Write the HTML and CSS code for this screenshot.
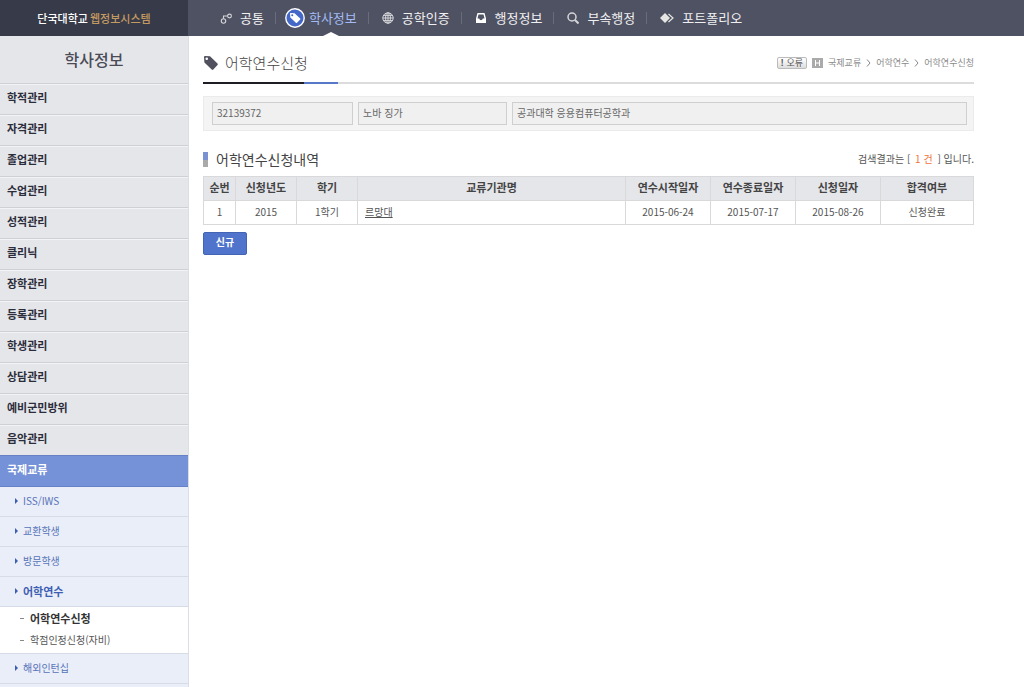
FILE: index.html
```html
<!DOCTYPE html>
<html lang="ko">
<head>
<meta charset="utf-8">
<title>단국대학교 웹정보시스템</title>
<link rel="stylesheet" href="styles.css">
</head>
<body>
<header class="topbar">
  <a class="brand" href="#">단국대학교 <span class="brand-accent">웹정보시스템</span></a>
  <nav class="topnav">
    <a class="topnav-item" href="#">
      <svg class="icon" viewBox="0 0 12 12" fill="none" stroke="#d5d6da" stroke-width="1.1"><circle cx="3.500" cy="9" r="2.200"/><circle cx="9.500" cy="4" r="1.900"/><path d="M3.500 6.800V4H7.500"/></svg>
      <span>공통</span></a>
    <a class="topnav-item current" href="#">
      <svg class="badge" viewBox="0 0 20 20"><circle cx="10" cy="10" r="9.200" fill="#4468c8" stroke="#fff" stroke-width="1.400"/><path fill="#fff" fill-rule="evenodd" d="M5 5.6Q5 5 5.6 5L9.6 5.3 15.2 10.4Q15.7 11 15.2 11.5L12 14.8Q11.4 15.2 10.9 14.8L5.3 9.5ZM7.2 6.2a1 1 0 1 0 .1 2 1 1 0 0 0-.1-2Z"/></svg>
      <span class="topnav-label">학사정보</span></a>
    <a class="topnav-item" href="#">
      <svg class="icon" viewBox="0 0 12 12" fill="none" stroke="#d5d6da" stroke-width="1"><circle cx="6" cy="6" r="5.2"/><ellipse cx="6" cy="6" rx="2.4" ry="5.2"/><path d="M6 .8v10.4M.8 6h10.4M1.6 3.4h8.8M1.6 8.6h8.8"/></svg>
      <span>공학인증</span></a>
    <a class="topnav-item" href="#">
      <svg class="icon" viewBox="0 0 12 12"><path fill="#fff" fill-rule="evenodd" d="M2.500 1h7L11 6.500V11H1V6.500ZM3.500 2.400 2.500 6.500H4.200Q4.500 8.300 6 8.300T7.800 6.500H9.500L8.500 2.400Z"/></svg>
      <span>행정정보</span></a>
    <a class="topnav-item" href="#">
      <svg class="icon" viewBox="0 0 12 12" fill="none" stroke="#d5d6da"><circle cx="5" cy="5" r="4" stroke-width="1.5"/><path stroke-width="2" d="M8 8l3.500 3.500"/></svg>
      <span>부속행정</span></a>
    <a class="topnav-item" href="#">
      <svg class="icon wide" viewBox="0 0 14 12"><path fill="#e6e6e2" d="M5 1l5 5-5 5-5-5Z"/><path fill="none" stroke="#e6e6e2" stroke-width="1.200" d="M8.500 2l4.500 4-4.500 4"/></svg>
      <span>포트폴리오</span></a>
  </nav>
</header>
<div class="layout">
  <aside class="sidebar">
    <h2 class="sidebar-title">학사정보</h2>
    <ul class="menu">
      <li><a class="menu-link" href="#">학적관리</a></li>
      <li><a class="menu-link" href="#">자격관리</a></li>
      <li><a class="menu-link" href="#">졸업관리</a></li>
      <li><a class="menu-link" href="#">수업관리</a></li>
      <li><a class="menu-link" href="#">성적관리</a></li>
      <li><a class="menu-link" href="#">클리닉</a></li>
      <li><a class="menu-link" href="#">장학관리</a></li>
      <li><a class="menu-link" href="#">등록관리</a></li>
      <li><a class="menu-link" href="#">학생관리</a></li>
      <li><a class="menu-link" href="#">상담관리</a></li>
      <li><a class="menu-link" href="#">예비군민방위</a></li>
      <li><a class="menu-link" href="#">음악관리</a></li>
      <li><a class="menu-link active" href="#">국제교류</a>
        <ul class="submenu">
          <li><a class="sub-link" href="#">ISS/IWS</a></li>
          <li><a class="sub-link" href="#">교환학생</a></li>
          <li><a class="sub-link" href="#">방문학생</a></li>
          <li><a class="sub-link open" href="#">어학연수</a>
            <ul class="pages">
              <li><a class="page-link selected" href="#">어학연수신청</a></li>
              <li><a class="page-link" href="#">학점인정신청(자비)</a></li>
            </ul>
          </li>
          <li><a class="sub-link" href="#">해외인턴십</a></li>
        </ul>
      </li>
    </ul>
  </aside>
  <main class="content">
    <div class="page-head">
      <svg class="tag" viewBox="0 0 16 16"><path fill="#50505e" fill-rule="evenodd" d="M1 2Q1 1 2 1L7 1.300 14.500 8.500Q15.300 9.300 14.500 10.100L10.300 14.600Q9.500 15.300 8.700 14.600L1.400 7.400ZM3.700 2.500a1.300 1.300 0 1 0 .1 2.600 1.300 1.300 0 0 0-.1-2.600Z"/></svg>
      <h1 class="page-title">어학연수신청</h1>
      <button class="error-btn" type="button"><b>!</b> 오류</button>
      <nav class="crumbs">
        <svg class="home" viewBox="0 0 11 10"><path fill="#aaa" d="M0 0h11v10H0Z"/><path fill="none" stroke="#fff" d="M3.500 2v6M7.500 2v6M3.500 5h4"/></svg>
        <a href="#">국제교류</a>
        <svg class="chev" viewBox="0 0 5 8"><path d="M1 .5 4 4 1 7.500"/></svg>
        <a href="#">어학연수</a>
        <svg class="chev" viewBox="0 0 5 8"><path d="M1 .5 4 4 1 7.500"/></svg>
        <a href="#">어학연수신청</a>
      </nav>
    </div>
    <div class="rule"></div>
    <form class="student">
      <input class="field" type="text" aria-label="학번" value="32139372" readonly>
      <input class="field" type="text" aria-label="성명" value="노바 징가" readonly>
      <input class="field" type="text" aria-label="소속" value="공과대학 응용컴퓨터공학과" readonly>
    </form>
    <div class="section-head">
      <h2 class="section-title">어학연수신청내역</h2>
      <p class="result">검색결과는 [ <span class="count">1 건</span> ] 입니다.</p>
    </div>
    <table class="grid">
      <colgroup><col class="c-no"><col class="c-term"><col class="c-term"><col><col class="c-date"><col class="c-date"><col class="c-date"><col class="c-state"></colgroup>
      <thead><tr><th>순번</th><th>신청년도</th><th>학기</th><th>교류기관명</th><th>연수시작일자</th><th>연수종료일자</th><th>신청일자</th><th>합격여부</th></tr></thead>
      <tbody><tr><td>1</td><td>2015</td><td>1학기</td><td class="name"><a href="#">르망대</a></td><td>2015-06-24</td><td>2015-07-17</td><td>2015-08-26</td><td>신청완료</td></tr></tbody>
    </table>
    <button class="new-btn" type="button">신규</button>
  </main>
</div>
</body>
</html>
```
FILE: styles.css
```css
* { box-sizing: border-box; }
body {
  margin: 0;
  min-height: 100vh;
  display: flex;
  flex-direction: column;
  background: #fff;
  color: #555;
  font: 10px/16px "Noto Sans CJK KR", sans-serif;
}
ul { list-style: none; margin: 0; padding: 0; }
h1, h2, p { margin: 0; }
a { color: inherit; text-decoration: none; }
button, input { font: inherit; }
svg { flex: none; }

.topbar { display: flex; height: 36px; background: #4f5262; }
.brand {
  width: 188px;
  flex: none;
  display: flex;
  align-items: center;
  justify-content: center;
  gap: 2px;
  padding-bottom: 1px;
  background: #373b49;
  color: #fff;
  font-size: 11px;
  font-weight: 500;
}
.brand-accent { color: #c59a60; }
.topnav { display: flex; padding: 0 0 1px 18px; }
.topnav-item {
  position: relative;
  display: flex;
  align-items: center;
  gap: 8px;
  padding: 0 11px 0 14px;
  color: #f0f0f2;
  font-size: 13px;
  font-weight: 400;
  white-space: nowrap;
}
.topnav-item + .topnav-item::before {
  content: "";
  position: absolute;
  left: 0;
  top: 12px;
  height: 12px;
  border-left: 1px solid #696c7b;
}
.topnav-item.current { gap: 4px; padding: 0 11px 0 10px; color: #a3bbf5; }
.icon { width: 12px; height: 12px; }
.icon.wide { width: 14px; }
.badge { width: 20px; height: 20px; }
.topnav-label { position: relative; }
.topnav-label::after {
  content: "";
  position: absolute;
  left: 50%;
  bottom: -11px;
  margin-left: -12px;
  border: solid transparent;
  border-width: 0 10px 5px;
  border-bottom-color: #fff;
}

.layout { display: flex; flex: 1; }
.sidebar { width: 189px; flex: none; background: #e5e6ea; border-right: 1px solid #dcdee5; }
.sidebar-title {
  padding: 11px 0 12px;
  color: #4a4b57;
  font-size: 16px;
  font-weight: 500;
  line-height: 24px;
  text-align: center;
}
.menu-link {
  display: block;
  height: 31px;
  padding: 5px 7px;
  border-top: 1px solid #cfd0d5;
  box-shadow: inset 0 1px #f3f3f6;
  color: #2c2d3a;
  font-size: 11px;
  font-weight: 700;
}
.menu-link.active { background: #7591d7; border-color: #6681c6; box-shadow: none; color: #fff; }
.submenu { padding-bottom: 3px; border-top: 1px solid #6681c6; background: #eaeef8; }
.sub-link {
  display: flex;
  align-items: center;
  gap: 5px;
  height: 30px;
  padding: 0 15px 2px;
  border-bottom: 1px solid #d6dbe8;
  color: #5673b8;
}
.sub-link::before {
  content: "";
  border: solid transparent;
  border-width: 3px 0 3px 3px;
  border-left-color: #3c5eae;
}
.sub-link.open { color: #3c60b4; font-size: 11px; font-weight: 700; }
.pages { padding-bottom: 2px; background: #fff; border-bottom: 1px solid #d6dbe8; }
.page-link { display: flex; align-items: center; gap: 6px; height: 22px; padding-left: 20px; }
.page-link::before { content: ""; width: 4px; border-top: 1px solid #888; }
.page-link.selected { color: #333; font-size: 11px; font-weight: 700; }

.content { flex: 1; min-width: 0; padding: 15px 50px 15px 14px; }
.page-head { display: flex; align-items: center; height: 24px; }
.tag { width: 16px; height: 16px; margin-right: 6px; }
.page-title { color: #444; font-size: 15px; font-weight: 300; margin-right: auto; }
.error-btn {
  height: 12px;
  padding: 0 3px;
  border: 1px solid #bbb;
  border-radius: 2px;
  background: linear-gradient(#fff, #ddd);
  color: #555;
  font-size: 9px;
  line-height: 10px;
}
.crumbs { display: flex; align-items: center; gap: 5px; margin-left: 5px; color: #8a8a8a; font-size: 9px; }
.home { width: 11px; height: 10px; }
.chev { width: 5px; height: 8px; fill: none; stroke: #888; }
.rule {
  height: 2px;
  margin: 7px 0 12px;
  background: linear-gradient(90deg, #1e1d25 101px, #5578c8 101px 135px, #dcdcdc 135px);
}
.student {
  display: grid;
  grid-template-columns: 141px 149px 1fr;
  gap: 5px;
  padding: 5px 6px 5px 8px;
  border: 1px solid #ebebeb;
  background: #f4f4f4;
}
.field {
  width: 100%;
  min-width: 0;
  height: 23px;
  padding: 0 4px 2px;
  border: 1px solid #cfcfcf;
  background: #f0f0f0;
  color: #666;
}
.section-head {
  display: flex;
  align-items: center;
  justify-content: space-between;
  padding: 18px 0 7px;
}
.section-title {
  display: flex;
  align-items: center;
  gap: 8px;
  color: #444;
  font-size: 14px;
  font-weight: 400;
  line-height: 20px;
}
.section-title::before { content: ""; width: 5px; height: 15px; background: linear-gradient(#7c91d2 50%, #aaa 50%); }
.count { padding: 0 2px; color: #f0713c; }

.grid { width: 100%; table-layout: fixed; border-collapse: collapse; }
.c-no { width: 32px; }
.c-term { width: 61px; }
.c-date { width: 85px; }
.c-state { width: 93px; }
.grid th, .grid td { height: 24px; padding: 0 7px 2px; border: 1px solid #d9d9dc; text-align: center; white-space: nowrap; }
.grid th { padding: 0 0 3px; background: #e5e6ea; color: #444; font-size: 11px; font-weight: 700; }
.grid .name { text-align: left; }
.grid .name a { text-decoration: underline; }
.new-btn {
  margin-top: 7px;
  width: 44px;
  height: 23px;
  padding: 0 0 3px;
  border: 1px solid #4363b5;
  border-radius: 2px;
  background: #5074cc;
  color: #fff;
  font-weight: 700;
}
```
